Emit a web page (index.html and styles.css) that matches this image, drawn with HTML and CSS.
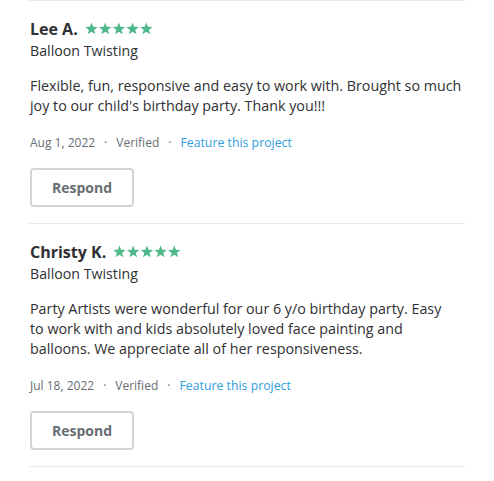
FILE: index.html
```html
<!DOCTYPE html>
<html>
<head>
<meta charset="utf-8">
<link rel="stylesheet" href="styles.css">
</head>
<body>
<div class="list">
  <div class="review">
    <div class="head">
      <span class="name">Lee A.</span>
      <span class="stars">
        <svg viewBox="0 0 68 14" width="68" height="14"><g fill="#4fb98b">
          <path id="s" d="M6.5 0.5l1.6 4.3 4.6 0.2-3.6 2.9 1.3 4.4-3.9-2.6-3.9 2.6 1.3-4.4-3.6-2.9 4.6-0.2z"/>
          <use href="#s" x="13.7"/><use href="#s" x="27.4"/><use href="#s" x="41.1"/><use href="#s" x="54.8"/>
        </g></svg>
      </span>
    </div>
    <div class="service">Balloon Twisting</div>
    <p class="body">Flexible, fun, responsive and easy to work with. Brought so much joy to our child's birthday party. Thank you!!!</p>
    <div class="meta"><span>Aug 1, 2022</span><span class="dot">·</span><span>Verified</span><span class="dot">·</span><a class="link">Feature this project</a></div>
    <button class="respond">Respond</button>
  </div>
  <div class="review">
    <div class="head">
      <span class="name">Christy K.</span>
      <span class="stars">
        <svg viewBox="0 0 68 14" width="68" height="14"><g fill="#4fb98b">
          <path id="s2" d="M6.5 0.5l1.6 4.3 4.6 0.2-3.6 2.9 1.3 4.4-3.9-2.6-3.9 2.6 1.3-4.4-3.6-2.9 4.6-0.2z"/>
          <use href="#s2" x="13.7"/><use href="#s2" x="27.4"/><use href="#s2" x="41.1"/><use href="#s2" x="54.8"/>
        </g></svg>
      </span>
    </div>
    <div class="service">Balloon Twisting</div>
    <p class="body">Party Artists were wonderful for our 6 y/o birthday party. Easy<br>to work with and kids absolutely loved face painting and balloons. We appreciate all of her responsiveness.</p>
    <div class="meta"><span>Jul 18, 2022</span><span class="dot">·</span><span>Verified</span><span class="dot">·</span><a class="link">Feature this project</a></div>
    <button class="respond">Respond</button>
  </div>
</div>
</body>
</html>
```
FILE: styles.css
```css
html, body { margin: 0; padding: 0; background: #fff; }
body { font-family: "Open Sans", "Noto Sans", sans-serif; color: #2f3033; }
.list { margin: 0 29px 0 29px; width: 436px; border-top: 1px solid #e9eaeb; }
.review { border-bottom: 1px solid #e9eaeb; padding: 18px 0 16px 1px; }
.head { display: flex; align-items: center; gap: 7px; height: 20px; }
.name { font-size: 16px; font-weight: 700; color: #2f3033; }
.stars { display: flex; }
.stars svg { display: block; }
.service { font-size: 14.2px; line-height: 20px; margin-top: 2px; color: #2f3033; }
.body { font-size: 14.3px; line-height: 20px; margin: 15px 0 0 0; color: #2f3033; max-width: 433px; }
.meta { font-size: 12px; color: #676d73; margin-top: 19px; line-height: 16px; display: flex; }
.dot { margin: 0 9px; }
.link { color: #2f9ede; font-size: 12.3px; }
.respond { margin-top: 17px; width: 104px; height: 39px; border: 2px solid #d3d4d5; border-radius: 4px; background: #fff; font-family: inherit; font-size: 14px; font-weight: 700; color: #676d73; padding: 0; display: block; }
```
